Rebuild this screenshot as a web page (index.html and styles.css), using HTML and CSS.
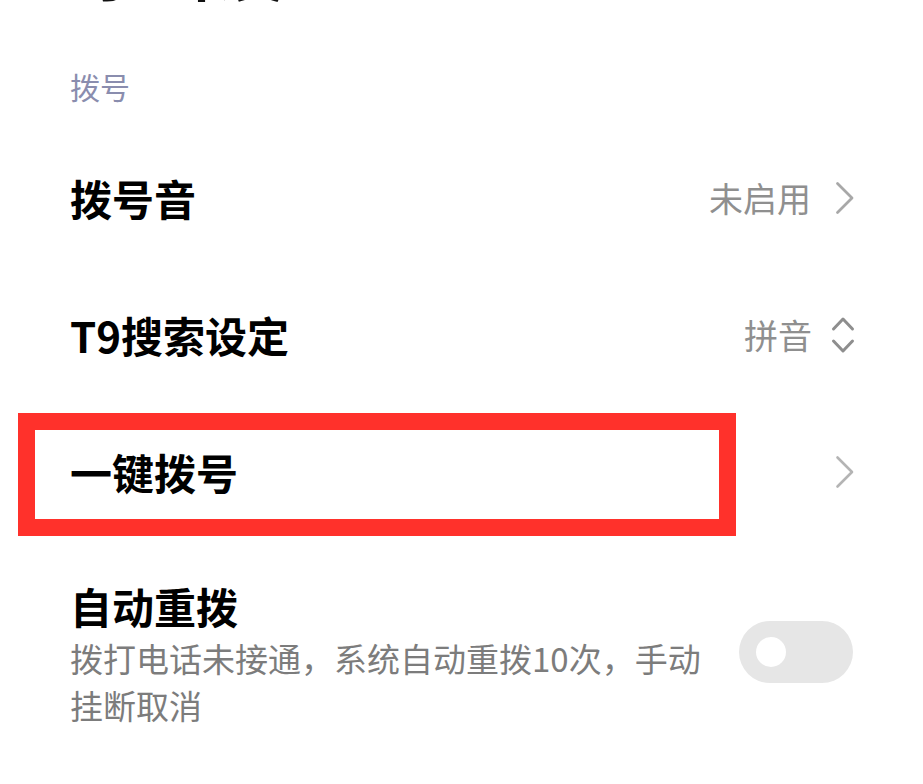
FILE: index.html
```html
<!DOCTYPE html>
<html lang="zh-CN">
<head>
<meta charset="utf-8">
<title>呼叫设置</title>
<link rel="stylesheet" href="styles.css">
</head>
<body>
<div class="page">
  <div class="title">呼叫设置</div>
  <div class="section-header">拨号</div>
  <div class="list">
    <div class="row">
      <div class="row-title">拨号音</div>
      <div class="row-right">
        <span class="value">未启用</span>
        <svg class="chev" width="20" height="34" viewBox="0 0 20 34"><path d="M2.5 2.5 L17 17 L2.5 31.5" fill="none" stroke="#a8a8a8" stroke-width="2.8" stroke-linecap="round" stroke-linejoin="round"/></svg>
      </div>
    </div>
    <div class="row">
      <div class="row-title">T9搜索设定</div>
      <div class="row-right">
        <span class="value">拼音</span>
        <svg class="updown" width="24" height="38" viewBox="0 0 24 38"><path d="M2.5 13 L12 3 L21.5 13 M2.5 25 L12 35 L21.5 25" fill="none" stroke="#8e8e8e" stroke-width="3" stroke-linecap="round" stroke-linejoin="round"/></svg>
      </div>
    </div>
    <div class="row row-marked">
      <div class="row-title">一键拨号</div>
      <div class="row-right">
        <svg class="chev" width="20" height="34" viewBox="0 0 20 34"><path d="M2.5 2.5 L17 17 L2.5 31.5" fill="none" stroke="#b4b4b4" stroke-width="2.6" stroke-linecap="round" stroke-linejoin="round"/></svg>
      </div>
      <div class="highlight"></div>
    </div>
    <div class="row row-tall">
      <div class="row-text">
        <div class="row-title">自动重拨</div>
        <div class="row-sub">拨打电话未接通，系统自动重拨10次，手动挂断取消</div>
      </div>
      <div class="toggle"><span class="knob"></span></div>
    </div>
  </div>
</div>
</body>
</html>
```
FILE: styles.css
```css
html, body {
  margin: 0;
  padding: 0;
  background: #ffffff;
}
body {
  font-family: "Noto Sans CJK SC", "Noto Sans", sans-serif;
  color: #000;
}
.page {
  width: 923px;
  height: 784px;
  overflow: hidden;
  background: #fff;
}
.title {
  font-size: 72px;
  font-weight: 500;
  line-height: 80px;
  height: 80px;
  margin-top: -76px;
  padding-left: 68px;
  color: #111;
  white-space: nowrap;
}
.section-header {
  margin-top: 53px;
  padding-left: 70px;
  font-size: 30px;
  line-height: 58px;
  height: 58px;
  color: #8a8dae;
}
.list {
  margin-top: 14px;
}
.row {
  height: 137px;
  padding: 0 70px;
  display: flex;
  align-items: center;
  justify-content: space-between;
  box-sizing: border-box;
}
.row-title {
  font-size: 42px;
  font-weight: 700;
  line-height: 50px;
  color: #000;
}
.row-right {
  display: flex;
  align-items: center;
  gap: 24px;
}
.value {
  font-size: 34px;
  line-height: 40px;
  color: #8f8f8f;
}
.chev {
  display: block;
  margin-right: -2px;
}
.updown {
  display: block;
  margin-left: -5px;
  margin-right: -2px;
}
.row-marked {
  position: relative;
}
.highlight {
  position: absolute;
  left: 18px;
  top: 10px;
  width: 718px;
  height: 123px;
  box-sizing: border-box;
  border: 17px solid #ff312b;
}
.row-tall {
  height: auto;
  padding-top: 41px;
  align-items: center;
}
.row-text {
  width: 650px;
}
.row-sub {
  margin-top: 4px;
  font-size: 33px;
  line-height: 47px;
  color: #7c7c7c;
}
.toggle {
  width: 114px;
  height: 62px;
  border-radius: 31px;
  background: #e6e6e6;
  position: relative;
  margin-top: -7px;
  flex-shrink: 0;
}
.knob {
  position: absolute;
  left: 17px;
  top: 16px;
  width: 30px;
  height: 30px;
  border-radius: 50%;
  background: #fff;
}
```
